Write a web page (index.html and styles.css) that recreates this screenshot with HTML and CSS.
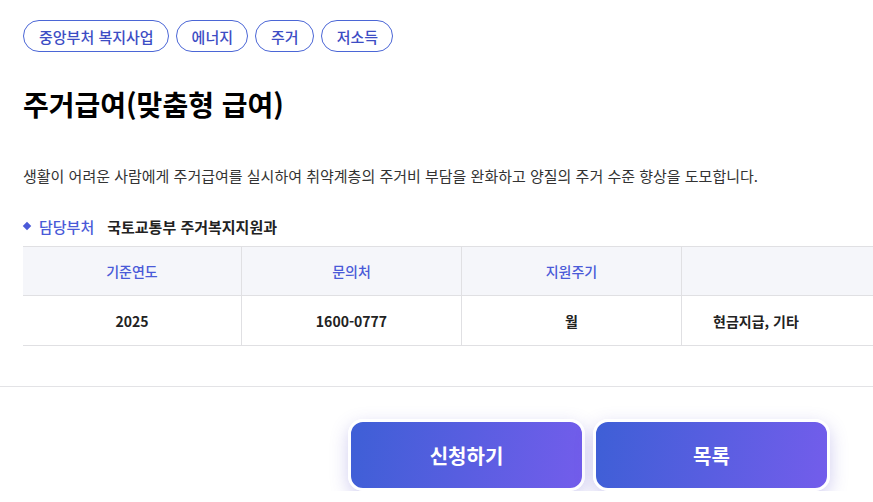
FILE: index.html
```html
<!DOCTYPE html>
<html lang="ko">
<head>
<meta charset="utf-8">
<link rel="stylesheet" href="styles.css">
</head>
<body>
<div class="page">
  <div class="content">
    <div class="tags">
      <span class="tag">중앙부처 복지사업</span>
      <span class="tag">에너지</span>
      <span class="tag">주거</span>
      <span class="tag">저소득</span>
    </div>
    <h1 class="title">주거급여(맞춤형 급여)</h1>
    <p class="desc">생활이 어려운 사람에게 주거급여를 실시하여 취약계층의 주거비 부담을 완화하고 양질의 주거 수준 향상을 도모합니다.</p>
    <div class="dept">
      <span class="bullet"></span>
      <span class="dept-label">담당부처</span>
      <span class="dept-value">국토교통부 주거복지지원과</span>
    </div>
    <div class="table">
      <div class="row head">
        <div class="cell">기준연도</div>
        <div class="cell">문의처</div>
        <div class="cell">지원주기</div>
        <div class="cell"></div>
      </div>
      <div class="row body">
        <div class="cell">2025</div>
        <div class="cell">1600-0777</div>
        <div class="cell">월</div>
        <div class="cell left">현금지급, 기타</div>
      </div>
    </div>
  </div>
  <div class="divider"></div>
  <div class="actions">
    <button class="btn">신청하기</button>
    <button class="btn">목록</button>
  </div>
</div>
</body>
</html>
```
FILE: styles.css
```css
* { box-sizing: border-box; }
html, body {
  margin: 0;
  padding: 0;
  background: #fff;
  overflow: hidden;
}
body {
  font-family: "Noto Sans CJK KR", "Noto Sans", sans-serif;
  color: #222;
  width: 873px;
  height: 502px;
}
.page {
  width: 873px;
  overflow: hidden;
}
.content {
  padding: 20px 0 0 23px;
}
.tags {
  display: flex;
  gap: 7px;
}
.tag {
  display: inline-flex;
  align-items: center;
  height: 32px;
  padding: 0 14px 0 15px;
  border: 1px solid #4b66d6;
  border-radius: 16px;
  font-size: 15px;
  font-weight: 500;
  color: #3d4dc4;
  line-height: 1;
}
.title {
  margin: 0;
  margin-top: 32px;
  font-size: 28px;
  font-weight: 700;
  line-height: 40px;
  color: #000;
}
.desc {
  margin: 0;
  margin-top: 41px;
  font-size: 15px;
  line-height: 22px;
  color: #333;
}
.dept {
  display: flex;
  align-items: center;
  margin-top: 27px;
  height: 24px;
}
.bullet {
  width: 6px;
  height: 6px;
  background: #4a5ad8;
  transform: rotate(45deg);
  margin: 0 9px 0 1px;
}
.dept-label {
  font-size: 15px;
  font-weight: 500;
  color: #4a5ad8;
}
.dept-value {
  margin-left: 13px;
  font-size: 15px;
  font-weight: 600;
  color: #222;
}
.table {
  margin-top: 8px;
  width: 880px;
  border-top: 1px solid #e0e0e3;
}
.row {
  display: grid;
  grid-template-columns: 219px 220px 220px 221px;
  border-bottom: 1px solid #e0e0e3;
}
.row.head {
  background: #f5f6fa;
  height: 49px;
}
.row.body {
  height: 50px;
}
.cell {
  display: flex;
  align-items: center;
  justify-content: center;
  border-right: 1px solid #e0e0e3;
  font-size: 14px;
}
.cell:last-child { border-right: none; }
.head .cell {
  color: #4a5ad8;
  font-weight: 500;
}
.body .cell {
  color: #222;
  font-weight: 700;
}
.cell.left {
  justify-content: flex-start;
  padding-left: 31px;
}
.divider {
  margin-top: 40px;
  height: 1px;
  background: #e3e3e6;
}
.actions {
  display: flex;
  gap: 8px;
  padding-left: 348px;
  margin-top: 32px;
}
.btn {
  width: 237px;
  height: 72px;
  border: 3px solid #fff;
  border-radius: 15px;
  background: linear-gradient(100deg, #3e5fd6 0%, #735deb 100%);
  color: #fff;
  font-family: "Noto Sans CJK KR", "Noto Sans", sans-serif;
  font-size: 20px;
  font-weight: 700;
  box-shadow: 0 6px 18px rgba(90, 80, 200, 0.28);
  cursor: pointer;
}
```
